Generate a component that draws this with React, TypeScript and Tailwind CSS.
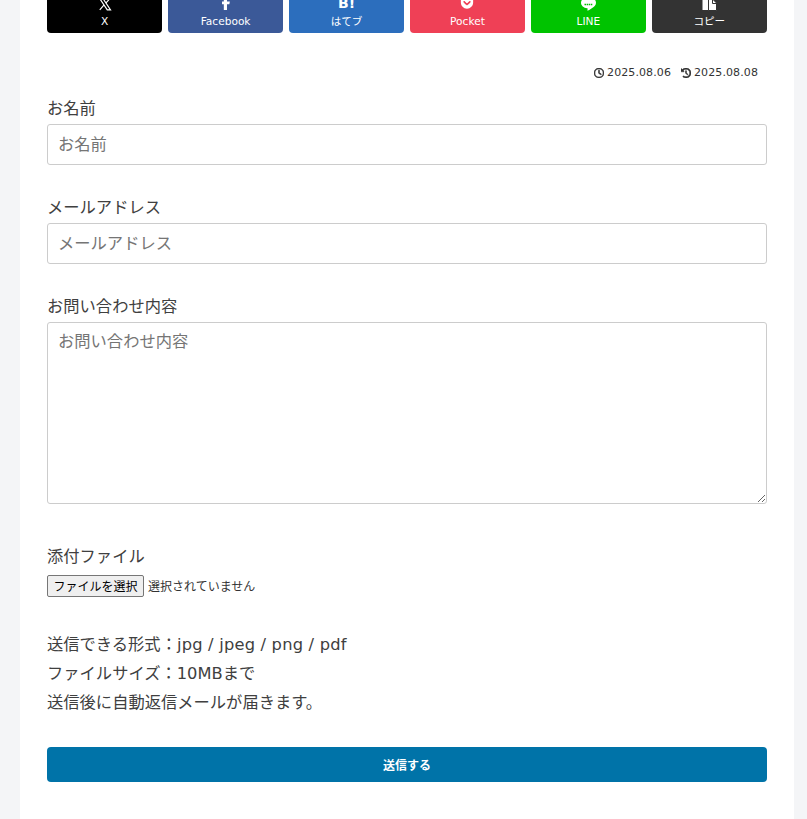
import React from "react";
import { FaFacebookF, FaGetPocket, FaRegClock, FaClockRotateLeft } from "react-icons/fa6";

const font = "font-['DejaVu_Sans','Noto_Sans_CJK_JP',sans-serif]";

const XIcon = () => (
  <svg width="14" height="14" viewBox="0 0 24 24" fill="none" stroke="currentColor" strokeWidth="2" strokeLinejoin="miter">
    <path d="M2.5 2h5.6l13.4 20h-5.600z" />
    <path d="M21 2l-7.600 8.600M10.400 13.600 3 22" />
  </svg>
);

const LineIcon = () => (
  <svg width="15" height="14" viewBox="0 0 15 14">
    <path d="M7.500 0C3.400 0 0 2.500 0 5.700c0 2.800 2.600 5.100 6.200 5.600.5.100.5.400.4.800l-.2 1.100c0 .4.200.6.700.4 1.600-.8 5.200-3 6.600-4.600C14.600 8 15 6.900 15 5.700 15 2.500 11.600 0 7.500 0z" fill="#ffffff" />
    <path d="M3.500 7.500h8" stroke="#00c300" strokeWidth="1.600" strokeDasharray="1.500 .6" fill="none" />
  </svg>
);

const CopyIcon = () => (
  <svg width="15" height="16" viewBox="0 0 15 16">
    <rect x="0.500" y="0" width="9" height="15" fill="#ffffff" />
    <path d="M6.500 4.500h4.500l3.500 3.500v7.500h-8z" fill="#ffffff" stroke="#333333" strokeWidth="1" />
    <path d="M10.500 4.500v4h4" fill="none" stroke="#333333" strokeWidth="1" />
  </svg>
);

const shares = [
  { label: "X", bg: "bg-[#000000]", icon: <XIcon /> },
  { label: "Facebook", bg: "bg-[#3b5998]", icon: <FaFacebookF size={14} className="mb-[1px]" /> },
  { label: "はてブ", bg: "bg-[#2c6ebd]", icon: <span className="mb-[1px] text-[14px] font-bold leading-[14px]">B!</span> },
  { label: "Pocket", bg: "bg-[#ef4056]", icon: <FaGetPocket size={14} className="mb-[1px]" /> },
  { label: "LINE", bg: "bg-[#00c300]", icon: <LineIcon /> },
  { label: "コピー", bg: "bg-[#333333]", icon: <CopyIcon /> },
];

function Field({ label, children }: { label: string; children: React.ReactNode }) {
  return (
    <div className="flex flex-col">
      <label className="h-[26px] text-[16.3px] leading-[22px] text-[#404040]">{label}</label>
      {children}
    </div>
  );
}

const inputCls =
  "block w-full rounded-[3px] border border-[#cccccc] bg-white px-[10px] text-[16.3px] text-[#333333] outline-none placeholder:text-[#757575]";

export default function App() {
  return (
    <div className={`h-[819px] overflow-hidden bg-[#f4f5f7] pl-[20px] ${font}`}>
      <main className="h-[860px] w-[774px] bg-white px-[27px]">
        <div className="-mt-[17px] grid grid-cols-6 gap-[5.5px]">
          {shares.map((s) => (
            <div
              key={s.label}
              className={`flex h-[50px] flex-col items-center rounded-[4px] text-white ${s.bg}`}
            >
              <div className="flex h-[30px] items-end justify-center pb-[2px]">{s.icon}</div>
              <div className="text-[10.6px] leading-[17px]">{s.label}</div>
            </div>
          ))}
        </div>

        <div className="mt-[32px] flex h-[16px] items-center justify-end gap-[10px] pr-[9px] text-[11px] tracking-[0.1px] text-[#333333]">
          <span className="flex items-center gap-[3px]">
            <FaRegClock size={10} strokeWidth={30} />
            2025.08.06
          </span>
          <span className="flex items-center gap-[3px]">
            <FaClockRotateLeft size={10} strokeWidth={30} />
            2025.08.08
          </span>
        </div>

        <div className="mt-[17px] flex flex-col gap-[32px]">
          <Field label="お名前">
            <input placeholder="お名前" className={`${inputCls} h-[41px]`} />
          </Field>
          <Field label="メールアドレス">
            <input placeholder="メールアドレス" className={`${inputCls} h-[41px]`} />
          </Field>
          <Field label="お問い合わせ内容">
            <textarea placeholder="お問い合わせ内容" className={`${inputCls} h-[182px] resize-y py-[7px]`} />
          </Field>
        </div>

        <div className="mt-[40px] h-[26px] text-[16.3px] leading-[26px] text-[#404040]">添付ファイル</div>
        <div className="mt-[5px] flex h-[22px] items-center gap-[4px] text-[12px] text-[#333333]">
          <button className="h-[22px] w-[97px] rounded-[2px] border border-[#767676] bg-[#efefef] pt-[1px] text-[12px] text-black">
            ファイルを選択
          </button>
          <span className="pt-[1px]">選択されていません</span>
        </div>

        <div className="mt-[33px] text-[16.3px] leading-[29px] text-[#404040]">
          <p>
            送信できる形式：<span className="tracking-[0.2px]">jpg / jpeg / png / pdf</span>
          </p>
          <p>ファイルサイズ：10MBまで</p>
          <p>送信後に自動返信メールが届きます。</p>
        </div>

        <button className="mt-[30px] block h-[35px] w-full rounded-[4px] bg-[#0073a8] pt-[3px] text-[12px] font-bold text-white">
          送信する
        </button>
      </main>
    </div>
  );
}
